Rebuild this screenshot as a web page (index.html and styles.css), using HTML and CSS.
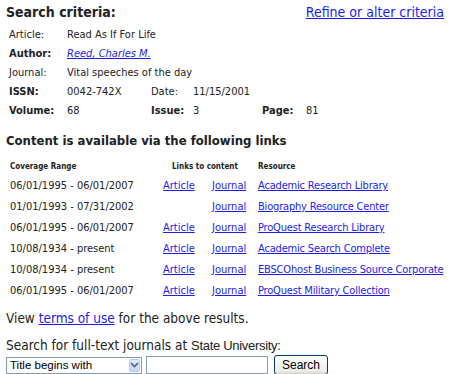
FILE: index.html
```html
<!doctype html>
<html>
<head>
  <meta charset="utf8">
  <title> Search results </title>
  <link rel="stylesheet" href="styles.css">
</head>
<body>
  <div class="top">
    <h1>Search criteria:</h1>
    <a href="#" class="refine">Refine or alter criteria</a>
  </div>

  <table class="criteria">
    <tr>
      <td class="lbl">Article:</td>
      <td colspan="5">Read As If For Life</td>
    </tr>
    <tr>
      <td class="lbl"><b>Author:</b></td>
      <td colspan="5"><a href="#" class="author">Reed, Charles M.</a></td>
    </tr>
    <tr>
      <td class="lbl">Journal:</td>
      <td colspan="5">Vital speeches of the day</td>
    </tr>
    <tr>
      <td class="lbl"><b>ISSN:</b></td>
      <td class="val">0042-742X</td>
      <td class="lbl2">Date:</td>
      <td colspan="3">11/15/2001</td>
    </tr>
    <tr>
      <td class="lbl"><b>Volume:</b></td>
      <td class="val">68</td>
      <td class="lbl2"><b>Issue:</b></td>
      <td class="val2">3</td>
      <td class="lbl3"><b>Page:</b></td>
      <td>81</td>
    </tr>
  </table>

  <h2>Content is available via the following links</h2>

  <table class="links">
    <colgroup>
      <col class="c-range">
      <col class="c-art">
      <col class="c-jrn">
      <col class="c-res">
    </colgroup>
    <tr class="head">
      <td>Coverage Range</td>
      <td colspan="2" class="linkhead">Links to content</td>
      <td>Resource</td>
    </tr>
    <tr>
      <td>06/01/1995 - 06/01/2007</td>
      <td><a href="#">Article</a></td>
      <td><a href="#">Journal</a></td>
      <td class="res"><a href="#">Academic Research Library</a></td>
    </tr>
    <tr>
      <td>01/01/1993 - 07/31/2002</td>
      <td></td>
      <td><a href="#">Journal</a></td>
      <td class="res"><a href="#">Biography Resource Center</a></td>
    </tr>
    <tr>
      <td>06/01/1995 - 06/01/2007</td>
      <td><a href="#">Article</a></td>
      <td><a href="#">Journal</a></td>
      <td class="res"><a href="#">ProQuest Research Library</a></td>
    </tr>
    <tr>
      <td>10/08/1934 - present</td>
      <td><a href="#">Article</a></td>
      <td><a href="#">Journal</a></td>
      <td class="res"><a href="#">Academic Search Complete</a></td>
    </tr>
    <tr>
      <td>10/08/1934 - present</td>
      <td><a href="#">Article</a></td>
      <td><a href="#">Journal</a></td>
      <td class="res"><a href="#">EBSCOhost Business Source Corporate</a></td>
    </tr>
    <tr>
      <td>06/01/1995 - 06/01/2007</td>
      <td><a href="#">Article</a></td>
      <td><a href="#">Journal</a></td>
      <td class="res"><a href="#">ProQuest Military Collection</a></td>
    </tr>
  </table>

  <p class="terms">View <a href="#">terms of use</a> for the above results.</p>

  <form class="search">
    <div class="search-label">Search for full-text journals at <span class="uni">State University:</span></div>
    <div class="search-row">
      <div class="kind">
        <select class="kind-select">
          <option>Title begins with</option>
        </select>
        <span class="kind-arrow">
          <svg width="9" height="6" viewBox="0 0 9 6"><path d="M1 1 L4.5 4.5 L8 1" fill="none" stroke="#4d6185" stroke-width="1.6"/></svg>
        </span>
      </div>
      <input type="text" class="query">
      <button type="button" class="go">Search</button>
    </div>
  </form>
</body>
</html>
```

FILE: styles.css
```css
html, body {
  margin: 0px;
  padding: 0px;
  background: #fff;
}
body {
  padding: 2px 6px 0 6px;
  color: #222;
  font-family: "DejaVu Sans Condensed", "DejaVu Sans", sans-serif;
  font-size: 11px;
}
a {
  color: #1c1cf0;
}
.top {
  display: flex;
  justify-content: space-between;
  align-items: baseline;
}
h1 {
  margin: 0;
  font-size: 14px;
  line-height: 20px;
}
.refine {
  font-size: 14px;
}
table {
  border-collapse: collapse;
}
td {
  padding: 0;
}
.criteria {
  margin: 3px 0 0 3px;
}
.criteria td {
  height: 19px;
}
.criteria .lbl { width: 58px; }
.criteria .val { width: 84px; }
.criteria .lbl2 { width: 42px; }
.criteria .val2 { width: 69px; }
.criteria .lbl3 { width: 44px; }
.author {
  font-style: italic;
}
h2 {
  margin: 13px 0 10px 0;
  font-size: 13px;
}
.links {
  margin-left: 4px;
  table-layout: fixed;
  width: 440px;
}
.links td {
  height: 21px;
  white-space: nowrap;
}
.links .head td {
  height: 17px;
  font-size: 8px;
  font-weight: bold;
}
.c-range { width: 153px; }
.c-art { width: 49px; }
.c-jrn { width: 46px; }
.links .linkhead { padding-left: 9px; }
.links .res { letter-spacing: -0.18px; }
.terms {
  margin: 9px 0 0 0;
  font-size: 13.5px;
}
.search {
  margin: 11px 0 0 0;
}
.search-label {
  font-size: 13.5px;
}
.uni {
  font-family: "Liberation Sans", sans-serif;
  font-size: 13px;
  letter-spacing: -0.3px;
}
.search-row {
  margin-top: 2px;
  display: flex;
  align-items: center;
  gap: 4px;
}
.kind {
  display: flex;
  width: 136px;
  height: 17px;
  box-sizing: border-box;
  border: 1px solid #7f9db9;
  background: #fff;
}
.kind-select {
  flex: 1;
  min-width: 0;
  appearance: none;
  border: none;
  outline: none;
  background: transparent;
  font-family: "Liberation Sans", sans-serif;
  font-size: 11.5px;
  padding: 0 0 0 3px;
  color: #000;
}
.kind-arrow {
  display: flex;
  align-items: center;
  justify-content: center;
  width: 9px;
  margin: 1px;
  border: 1px solid #b9c9ef;
  border-radius: 2px;
  background: linear-gradient(#e3ebfd, #c5d3f7);
}
.query {
  width: 122px;
  height: 18px;
  box-sizing: border-box;
  border: 1px solid #7f9db9;
  padding: 1px;
}
.go {
  margin-left: 2px;
  width: 54px;
  height: 20px;
  font-family: "Liberation Sans", sans-serif;
  font-size: 12px;
  color: #000;
  border: 1px solid #003c74;
  border-radius: 3px;
  background: linear-gradient(#fff, #ecebe6 85%, #d6d0c5);
  padding: 0;
}
```
